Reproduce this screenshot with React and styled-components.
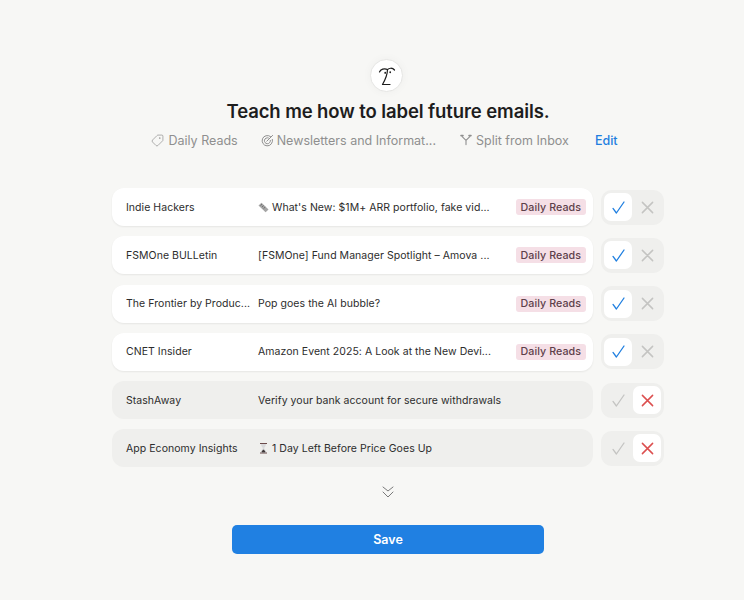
import React from "react";
import styled, { createGlobalStyle } from "styled-components";
import { Tag } from "lucide-react";

const emails = [
  { sender: "Indie Hackers", icon: "paper", subject: "What's New: $1M+ ARR portfolio, fake vid...", keep: true },
  { sender: "FSMOne BULLetin", subject: "[FSMOne] Fund Manager Spotlight – Amova ...", keep: true },
  { sender: "The Frontier by Produc...", subject: "Pop goes the AI bubble?", keep: true },
  { sender: "CNET Insider", subject: "Amazon Event 2025: A Look at the New Devi...", keep: true },
  { sender: "StashAway", subject: "Verify your bank account for secure withdrawals", keep: false },
  { sender: "App Economy Insights", icon: "hourglass", subject: "1 Day Left Before Price Goes Up", keep: false },
];

const Global = createGlobalStyle`
  html, body {
    margin: 0;
    background: #f7f7f5;
  }
  body {
    font-family: Inter, "Liberation Sans", sans-serif;
    color: #2c2c2c;
  }
`;

const Page = styled.main`
  width: 744px;
  height: 600px;
  box-sizing: border-box;
  padding: 59px 80px 0 112px;
  display: flex;
  flex-direction: column;
  align-items: center;
  overflow: hidden;
`;

const Logo = styled.div`
  width: 33px;
  height: 33px;
  box-sizing: border-box;
  margin-left: -3px;
  border-radius: 50%;
  background: #fff;
  border: 1px solid #e6e6e4;
  box-shadow: 0 0 10px rgba(0, 0, 0, 0.04);
  display: flex;
  align-items: center;
  justify-content: center;
`;

const Title = styled.h1`
  margin: 6px 0 0;
  font-size: 18.5px;
  line-height: 26px;
  font-weight: 600;
  letter-spacing: -0.1px;
  color: #1d1d1d;
`;

const Meta = styled.div`
  display: flex;
  align-items: center;
  height: 22px;
  margin: 5px 0 0 -7px;
  font-size: 12.5px;
  color: #8f8f8f;
`;

const MetaItem = styled.span`
  display: flex;
  align-items: center;
  gap: ${(p) => p.$gap}px;
  margin-right: ${(p) => p.$space}px;
`;

const EditLink = styled.a`
  color: #1f7fe0;
  font-weight: 500;
`;

const List = styled.div`
  width: 552px;
  margin-top: 37px;
  display: flex;
  flex-direction: column;
  gap: 10.3px;
`;

const Row = styled.div`
  display: flex;
  align-items: center;
  gap: 8px;
`;

const Card = styled.div`
  flex: 1;
  height: 38px;
  box-sizing: border-box;
  padding: 0 7px 0 14px;
  display: flex;
  align-items: center;
  border-radius: 12px;
  font-size: 10.5px;
  letter-spacing: 0.05px;
  background: ${(p) => (p.$keep ? "#fff" : "#efefed")};
  box-shadow: ${(p) => (p.$keep ? "0 1px 2px rgba(0, 0, 0, 0.07)" : "none")};
`;

const Sender = styled.span`
  width: 132px;
  flex: none;
  white-space: nowrap;
`;

const Subject = styled.span`
  flex: 1;
  display: flex;
  align-items: center;
  gap: 3px;
  white-space: nowrap;
`;

const Label = styled.span`
  height: 16px;
  padding: 0 5px;
  display: flex;
  align-items: center;
  flex: none;
  white-space: nowrap;
  border-radius: 3px;
  background: #f5dfe6;
  color: #5d404a;
  font-size: 10.7px;
  font-weight: 500;
`;

const Toggle = styled.div`
  width: 63px;
  height: 35px;
  box-sizing: border-box;
  padding: 3px;
  display: flex;
  justify-content: space-between;
  align-items: center;
  border-radius: 11px;
  background: #efefed;
`;

const Choice = styled.button`
  width: 28px;
  height: 28px;
  padding: 0;
  border: 0;
  display: flex;
  align-items: center;
  justify-content: center;
  border-radius: 7px;
  background: ${(p) => (p.$active ? "#fff" : "transparent")};
  color: ${(p) => (p.$active ? p.$color : "#c4c4c2")};
`;

const More = styled.div`
  height: 12px;
  margin-top: 18.5px;
  display: flex;
`;

const Save = styled.button`
  width: 312px;
  height: 29px;
  margin-top: 27px;
  border: 0;
  border-radius: 5px;
  background: #2080e2;
  color: #fff;
  font: 600 12.5px Inter, "Liberation Sans", sans-serif;
`;

const PalmLogo = () => (
  <svg width="20" height="20" viewBox="0 0 20 20" fill="none" stroke="#1c1c1c" strokeWidth="1.2" strokeLinecap="round" strokeLinejoin="round">
    <path d="M2.5 6C3.4 3.4 7.4 1.8 10.5 3.6C12 2 15.4 1.4 17.5 4" />
    <path d="M10.5 3.6C10.4 8.6 8.4 13.6 5.5 18.5H13" />
    <path d="M8.2 6.7V7M13.2 6V6.3" strokeWidth="1.7" />
  </svg>
);

const TargetIcon = () => (
  <svg width="13" height="13" viewBox="0 0 13 13" fill="none" stroke="#8f8f8f" strokeWidth="1" strokeLinecap="round">
    <path d="M9.6 2.6A5.2 5.2 0 1 0 11.4 5.4" />
    <path d="M7.4 3.9A3 3 0 1 0 9.4 6.4" />
    <path d="M5.8 7.2L11.6 1.4" />
  </svg>
);

const SplitIcon = () => (
  <svg width="12" height="12" viewBox="0 0 12 12" fill="none" stroke="#8f8f8f" strokeWidth="1.1" strokeLinecap="round">
    <path d="M2.2 2.6L6 6.4V10.6M9.8 2.6L6 6.4" />
    <path d="M1 1.6H3M9 1.6H11" strokeWidth="1.6" />
  </svg>
);

const CheckMark = () => (
  <svg width="13" height="13" viewBox="0 0 13 13" fill="none" stroke="currentColor" strokeWidth="1.3" strokeLinecap="round" strokeLinejoin="round">
    <path d="M1 7.4L4.4 12L12 1" />
  </svg>
);

const CrossMark = () => (
  <svg width="13" height="13" viewBox="0 0 13 13" fill="none" stroke="currentColor" strokeWidth="1.5" strokeLinecap="round">
    <path d="M1.4 1.4L11.6 11.6M11.6 1.4L1.4 11.6" />
  </svg>
);

const DoubleChevron = () => (
  <svg width="12" height="12" viewBox="0 0 12 12" fill="none" stroke="#7a7a7a" strokeWidth="1" strokeLinecap="round" strokeLinejoin="round">
    <path d="M1 1L6 5L11 1M1 6L6 11L11 6" />
  </svg>
);

const PaperEmoji = () => (
  <svg width="11" height="11" viewBox="0 0 11 11">
    <path d="M0.5 3.5L3.5 0.8L10.5 7.4L7.6 10.2Z" fill="#a5a5a5" />
    <path d="M2.5 3.5L4 2.2M4 5L5.6 3.6M5.6 6.5L7.2 5.1" stroke="#5f5f5f" strokeWidth="0.8" />
  </svg>
);

const HourglassEmoji = () => (
  <svg width="11" height="12" viewBox="0 0 11 12">
    <path d="M2 1H9V2H2ZM2 10.6H9V11.6H2Z" fill="#6b4a4a" />
    <path d="M3 2H8C8 4.5 6.2 5.3 6.2 6.2C6.2 7 8 8 8 10.6H3C3 8 4.8 7 4.8 6.2C4.8 5.3 3 4.5 3 2Z" fill="#d8d8da" />
    <path d="M3.4 10.6C3.8 8.8 5 8.2 5.5 7.6C6 8.2 7.2 8.8 7.6 10.6Z" fill="#3d3535" />
  </svg>
);

const emoji = { paper: <PaperEmoji />, hourglass: <HourglassEmoji /> };

const App = () => {
  return (
    <Page>
      <Global />
      <Logo>
        <PalmLogo />
      </Logo>
      <Title>Teach me how to label future emails.</Title>
      <Meta>
        <MetaItem $gap={4} $space={23}>
          <Tag size={13} strokeWidth={1.3} style={{ transform: "scaleX(-1)" }} />
          Daily Reads
        </MetaItem>
        <MetaItem $gap={3} $space={24}>
          <TargetIcon />
          Newsletters and Informat...
        </MetaItem>
        <MetaItem $gap={4} $space={26}>
          <SplitIcon />
          Split from Inbox
        </MetaItem>
        <EditLink>Edit</EditLink>
      </Meta>
      <List>
        {emails.map((item) => (
          <Row key={item.sender}>
            <Card $keep={item.keep}>
              <Sender>{item.sender}</Sender>
              <Subject>
                {item.icon && emoji[item.icon]}
                {item.subject}
              </Subject>
              {item.keep && <Label>Daily Reads</Label>}
            </Card>
            <Toggle>
              <Choice $active={item.keep} $color="#1f7fe0">
                <CheckMark />
              </Choice>
              <Choice $active={!item.keep} $color="#dc4f4f">
                <CrossMark />
              </Choice>
            </Toggle>
          </Row>
        ))}
      </List>
      <More>
        <DoubleChevron />
      </More>
      <Save>Save</Save>
    </Page>
  );
};

export default App;
